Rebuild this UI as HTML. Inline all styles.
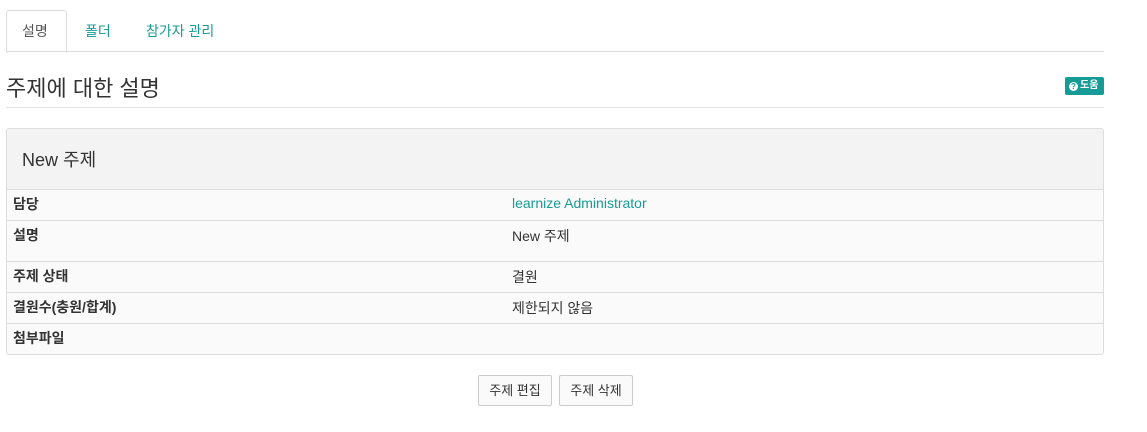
<!DOCTYPE html>
<html><head><meta charset="utf-8"><style>
body{margin:0;width:1147px;height:432px;background:#fff;font-family:"Liberation Sans","Noto Sans CJK KR",sans-serif;color:#333;position:relative;overflow:hidden}
.a{position:absolute;white-space:nowrap}
.tab{font-size:14px;color:#179b96;top:21px}
.row{position:absolute;left:7px;width:1096px;border-top:1px solid #ddd;background:#fafafa}
.row .l{position:absolute;left:6px;top:4px;font-weight:bold;font-size:14px}
.row .v{position:absolute;left:505px;top:5px;font-size:14px}
.btn{position:absolute;top:375px;height:29px;border:1px solid #ccc;border-radius:2px;background:#fafafa;font-size:13px;line-height:29px;text-align:center}
</style></head><body>
<div class="a" style="left:6px;top:10px;width:59px;height:42px;border:1px solid #ddd;border-bottom:none;border-radius:3px 3px 0 0;background:#fff"></div>
<div class="a" style="left:6px;top:51px;width:1098px;height:1px;background:#ddd"></div>
<div class="a tab" style="left:22px;color:#555">설명</div>
<div class="a tab" style="left:85px">폴더</div>
<div class="a tab" style="left:146px">참가자 관리</div>
<div class="a" style="left:6px;top:71px;font-size:22px;color:#333">주제에 대한 설명</div>
<div class="a" style="left:1065px;top:77px;width:39px;height:18px;background:#179b96;border-radius:2px;color:#fff;font-size:10px;line-height:18px;font-weight:bold"><span style="display:inline-block;width:9px;height:9px;border-radius:50%;background:#fff;color:#179b96;font-size:8px;line-height:9px;text-align:center;margin:0 2px 0 4px;vertical-align:-1px">?</span>도움</div>
<div class="a" style="left:6px;top:107px;width:1098px;height:1px;background:#e3e3e3"></div>
<div class="a" style="left:6px;top:128px;width:1096px;height:225px;border:1px solid #ddd;border-radius:3px;background:#fafafa"></div>
<div class="a" style="left:7px;top:129px;width:1096px;height:60px;background:#f3f3f3;border-radius:3px 3px 0 0"></div>
<div class="a" style="left:22px;top:146px;font-size:18px">New 주제</div>
<div class="row" style="top:189px;height:30px"><span class="l">담당</span><span class="v" style="color:#179b96">learnize Administrator</span></div>
<div class="row" style="top:220px;height:40px"><span class="l">설명</span><span class="v">New 주제</span></div>
<div class="row" style="top:261px;height:30px"><span class="l">주제 상태</span><span class="v">결원</span></div>
<div class="row" style="top:292px;height:30px"><span class="l">결원수(충원/합계)</span><span class="v">제한되지 않음</span></div>
<div class="row" style="top:323px;height:30px;border-radius:0 0 3px 3px"><span class="l">첨부파일</span></div>
<div class="btn" style="left:478px;width:72px">주제 편집</div>
<div class="btn" style="left:559px;width:72px">주제 삭제</div>
</body></html>
